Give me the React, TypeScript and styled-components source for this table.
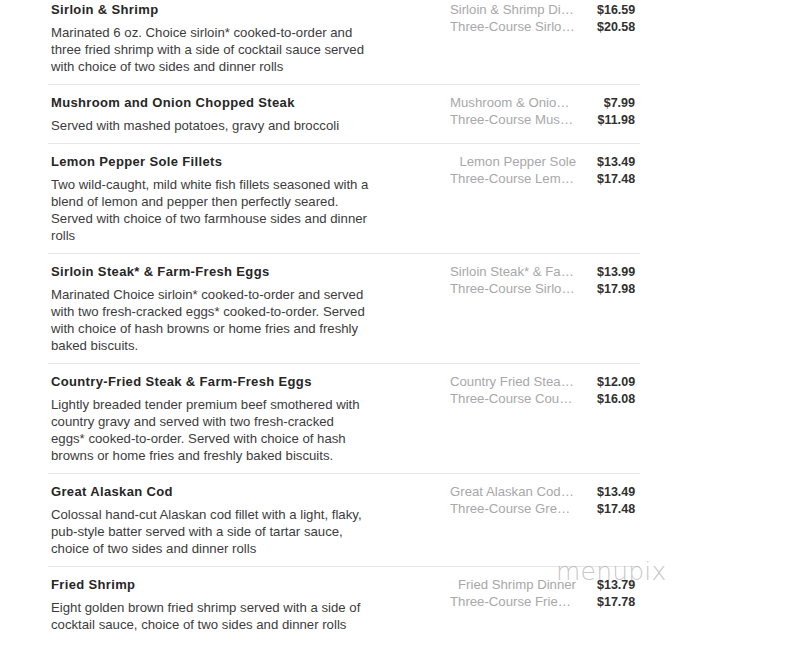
import { Fragment } from 'react';
import styled, { createGlobalStyle } from 'styled-components';

const GlobalStyle = createGlobalStyle`
  body {
    margin: 0;
    background: #fff;
    font-family: "Liberation Sans", Arial, sans-serif;
  }
`;

const Page = styled.div`
  position: relative;
  width: 789px;
  height: 655px;
  overflow: hidden;
`;

const List = styled.div`
  margin: -9px 0 0 48px;
  width: 592px;
`;

const Row = styled.div`
  display: flex;
  justify-content: space-between;
  align-items: flex-start;
  padding: 9px 5px 9px 3px;
  border-top: 1px solid #e6e6e6;

  &:first-child {
    border-top-color: transparent;
  }
`;

const Info = styled.div`
  width: 318px;
`;

const Name = styled.div`
  font-size: 13px;
  line-height: 18px;
  font-weight: 700;
  letter-spacing: 0.35px;
  color: #262626;
`;

const Description = styled.div`
  margin-top: 5px;
  font-size: 13.2px;
  line-height: 17px;
  color: #3c3c3c;
`;

const Prices = styled.div`
  display: grid;
  grid-template-columns: 126px 38px;
  column-gap: 21px;
  line-height: 16.5px;
  padding-top: 1px;
`;

const Option = styled.div`
  font-size: 13.2px;
  text-align: right;
  color: #a8a8a8;
  white-space: nowrap;
  overflow: hidden;
  text-overflow: ellipsis;
`;

const Amount = styled.div`
  font-size: 12.5px;
  text-align: right;
  font-weight: 700;
  color: #2f2f2f;
`;

const Watermark = styled.div`
  position: absolute;
  left: 556px;
  top: 557px;
  font-family: "DejaVu Sans", sans-serif;
  font-weight: 200;
  font-size: 25px;
  letter-spacing: 0.2px;
  color: rgba(150, 150, 150, 0.55);
  pointer-events: none;
`;

type Item = {
  name: string;
  description: string;
  options: [string, string][];
};

const items: Item[] = [
  {
    name: 'Sirloin & Shrimp',
    description:
      'Marinated 6 oz. Choice sirloin* cooked-to-order and three fried shrimp with a side of cocktail sauce served with choice of two sides and dinner rolls',
    options: [
      ['Sirloin & Shrimp Dinner', '$16.59'],
      ['Three-Course Sirloin & Shrimp', '$20.58'],
    ],
  },
  {
    name: 'Mushroom and Onion Chopped Steak',
    description: 'Served with mashed potatoes, gravy and broccoli',
    options: [
      ['Mushroom & Onion Chopped Steak', '$7.99'],
      ['Three-Course Mushroom & Onion', '$11.98'],
    ],
  },
  {
    name: 'Lemon Pepper Sole Fillets',
    description:
      'Two wild-caught, mild white fish fillets seasoned with a blend of lemon and pepper then perfectly seared. Served with choice of two farmhouse sides and dinner rolls',
    options: [
      ['Lemon Pepper Sole', '$13.49'],
      ['Three-Course Lemon Pepper Sole', '$17.48'],
    ],
  },
  {
    name: 'Sirloin Steak* & Farm-Fresh Eggs',
    description:
      'Marinated Choice sirloin* cooked-to-order and served with two fresh-cracked eggs* cooked-to-order. Served with choice of hash browns or home fries and freshly baked biscuits.',
    options: [
      ['Sirloin Steak* & Farm-Fresh Eggs', '$13.99'],
      ['Three-Course Sirloin Steak', '$17.98'],
    ],
  },
  {
    name: 'Country-Fried Steak & Farm-Fresh Eggs',
    description:
      'Lightly breaded tender premium beef smothered with country gravy and served with two fresh-cracked eggs* cooked-to-order. Served with choice of hash browns or home fries and freshly baked biscuits.',
    options: [
      ['Country Fried Steak & Eggs', '$12.09'],
      ['Three-Course Country Fried Steak', '$16.08'],
    ],
  },
  {
    name: 'Great Alaskan Cod',
    description:
      'Colossal hand-cut Alaskan cod fillet with a light, flaky, pub-style batter served with a side of tartar sauce, choice of two sides and dinner rolls',
    options: [
      ['Great Alaskan Cod Dinner', '$13.49'],
      ['Three-Course Great Alaskan Cod', '$17.48'],
    ],
  },
  {
    name: 'Fried Shrimp',
    description:
      'Eight golden brown fried shrimp served with a side of cocktail sauce, choice of two sides and dinner rolls',
    options: [
      ['Fried Shrimp Dinner', '$13.79'],
      ['Three-Course Fried Shrimp', '$17.78'],
    ],
  },
];

export default function App() {
  return (
    <Page>
      <GlobalStyle />
      <List>
        {items.map((item) => (
          <Row key={item.name}>
            <Info>
              <Name>{item.name}</Name>
              <Description>{item.description}</Description>
            </Info>
            <Prices>
              {item.options.map(([label, price]) => (
                <Fragment key={label}>
                  <Option>{label}</Option>
                  <Amount>{price}</Amount>
                </Fragment>
              ))}
            </Prices>
          </Row>
        ))}
      </List>
      <Watermark>menupix</Watermark>
    </Page>
  );
}
